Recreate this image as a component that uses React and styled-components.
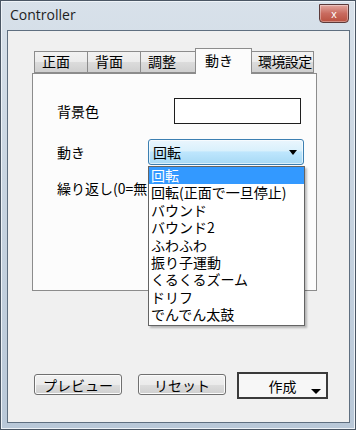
import styled, { createGlobalStyle } from 'styled-components';

const GlobalStyle = createGlobalStyle`
  html, body { margin: 0; padding: 0; background: #ffffff; }
  * { box-sizing: border-box; }
`;

const jp = `"Noto Sans CJK JP", "Noto Sans", sans-serif`;

const Window = styled.div`
  width: 356px;
  height: 430px;
  display: flex;
  flex-direction: column;
  background: linear-gradient(180deg, #d8e1ea 0%, #c9d5e1 40%, #b9c8d8 100%);
  border: 1px solid #4a5664;
  box-shadow: inset 0 0 0 1px #eef3f8;
`;

const TitleBar = styled.div`
  height: 29px;
  display: flex;
  align-items: flex-start;
  justify-content: space-between;
  padding: 0 6px 0 9px;
`;

const Title = styled.div`
  font-family: "Open Sans", "Noto Sans", sans-serif;
  font-size: 14px;
  color: #1e1e1e;
  margin-top: 4px;
`;

const CloseBtn = styled.div`
  width: 30px;
  height: 19px;
  margin-top: 3px;
  display: flex;
  align-items: center;
  justify-content: center;
  border: 1px solid #5b3a3a;
  border-radius: 0 0 4px 4px;
  background: linear-gradient(180deg, #e3a79f 0%, #c96b5f 50%, #b9503f 100%);
  color: #fff;
  font-family: "Liberation Sans", sans-serif;
  font-size: 11px;
  box-shadow: inset 0 0 0 1px rgba(255, 255, 255, 0.35);
`;

const Client = styled.div`
  flex: 1;
  margin: 0 5px 6px 6px;
  border: 1px solid #5f6f80;
  background: #f0f0f0;
  display: flex;
  flex-direction: column;
  padding: 16px 0 0 24px;
  position: relative;
`;

const TabStrip = styled.div`
  display: flex;
  align-items: flex-end;
  height: 26px;
  padding-left: 2px;
`;

const Tab = styled.div`
  height: ${(p) => (p.$active ? '26px' : '22px')};
  width: ${(p) => p.$w}px;
  margin: ${(p) => (p.$active ? '0 -1px -1px -1px' : '0')};
  padding: ${(p) => (p.$active ? '2px 0 0 9px' : '0 0 0 7px')};
  line-height: 19px;
  white-space: nowrap;
  border: 1px solid #8c8c8c;
  border-bottom: ${(p) => (p.$active ? 'none' : '1px solid #8c8c8c')};
  border-left: ${(p) => (p.$first || p.$active ? '1px solid #8c8c8c' : 'none')};
  background: ${(p) =>
    p.$active ? '#fcfcfc' : 'linear-gradient(180deg, #f2f2f2 0%, #ebebeb 50%, #dcdcdc 51%, #cfcfcf 100%)'};
  font-family: ${jp};
  font-size: 14px;
  letter-spacing: ${(p) => (p.$tight ? '-0.6px' : '0')};
  color: #000;
  position: relative;
  z-index: ${(p) => (p.$active ? 2 : 1)};
`;

const Panel = styled.div`
  width: 285px;
  height: 218px;
  background: #fcfcfc;
  border: 1px solid #8c8c8c;
  padding: 24px 12px 0 24px;
  display: flex;
  flex-direction: column;
  position: relative;
`;

const Row = styled.div`
  display: flex;
  align-items: center;
  justify-content: space-between;
  height: ${(p) => p.$h}px;
  margin-bottom: ${(p) => p.$mb || 0}px;
`;

const Label = styled.div`
  font-family: ${jp};
  font-size: 14px;
  color: #000;
  white-space: nowrap;
  overflow: hidden;
  max-width: ${(p) => (p.$clip ? `${p.$clip}px` : 'none')};
`;

const ColorBox = styled.div`
  width: 127px;
  height: 26px;
  margin-right: 3px;
  border: 1px solid #1e1e1e;
  background: #ffffff;
`;

const ComboWrap = styled.div`
  position: relative;
`;

const Combo = styled.div`
  width: 156px;
  height: 26px;
  border: 1px solid #3c7fb1;
  border-radius: 3px;
  background: linear-gradient(180deg, #eaf6fd 0%, #d9f0fc 45%, #bee6fd 50%, #a7d9f5 100%);
  display: flex;
  align-items: center;
  justify-content: space-between;
  padding: 0 6px 0 4px;
  font-family: ${jp};
  font-size: 14px;
  box-shadow: inset 0 0 0 1px rgba(255, 255, 255, 0.6);
`;

const Arrow = styled.div`
  width: 0;
  height: 0;
  border-left: 4px solid transparent;
  border-right: 4px solid transparent;
  border-top: 5px solid #000;
`;

const List = styled.div`
  position: absolute;
  left: 0;
  top: 27px;
  width: 157px;
  border: 1px solid #646464;
  background: #ffffff;
  box-shadow: 2px 2px 2px rgba(0, 0, 0, 0.25);
  z-index: 5;
  padding-bottom: 1px;
`;

const Item = styled.div`
  height: 17.4px;
  line-height: 17px;
  padding-left: 2px;
  font-family: ${jp};
  font-size: 14px;
  white-space: nowrap;
  color: ${(p) => (p.$sel ? '#ffffff' : '#000000')};
  background: ${(p) => (p.$sel ? '#3399ff' : 'transparent')};
`;

const Footer = styled.div`
  display: flex;
  align-items: center;
  margin-top: 81px;
  padding-left: 2px;
`;

const Button = styled.div`
  width: ${(p) => p.$w}px;
  height: 21px;
  margin-right: ${(p) => p.$mr}px;
  margin-top: -2px;
  border: 1px solid #707070;
  border-radius: 3px;
  background: linear-gradient(180deg, #f2f2f2 0%, #ebebeb 50%, #dddddd 51%, #cfcfcf 100%);
  box-shadow: inset 0 0 0 1px #fbfbfb;
  display: flex;
  align-items: center;
  justify-content: center;
  font-family: ${jp};
  font-size: 14px;
  color: #000;
`;

const SplitButton = styled.div`
  width: 91px;
  height: 27px;
  border: 2px solid #3a3a3a;
  background: #f7f7f7;
  display: flex;
  align-items: center;
  justify-content: center;
  font-family: ${jp};
  font-size: 14px;
  color: #000;
  position: relative;
`;

const SplitArrow = styled.div`
  position: absolute;
  right: 5px;
  bottom: 3px;
  width: 0;
  height: 0;
  border-left: 5px solid transparent;
  border-right: 5px solid transparent;
  border-top: 5px solid #000;
`;

const tabs = [
  { label: '正面', w: 54 },
  { label: '背面', w: 53 },
  { label: '調整', w: 55 },
  { label: '動き', w: 57, active: true },
  { label: '環境設定', w: 63, tight: true },
];

const motions = [
  '回転',
  '回転(正面で一旦停止)',
  'バウンド',
  'バウンド2',
  'ふわふわ',
  '振り子運動',
  'くるくるズーム',
  'ドリフ',
  'でんでん太鼓',
];

export default function App() {
  return (
    <>
      <GlobalStyle />
      <Window>
        <TitleBar>
          <Title>Controller</Title>
          <CloseBtn>x</CloseBtn>
        </TitleBar>
        <Client>
          <TabStrip>
            {tabs.map((t, i) => (
              <Tab key={t.label} $w={t.w} $active={t.active} $first={i === 0} $tight={t.tight}>
                {t.label}
              </Tab>
            ))}
          </TabStrip>
          <Panel>
            <Row $h={26} $mb={15}>
              <Label>背景色</Label>
              <ColorBox />
            </Row>
            <Row $h={26} $mb={12}>
              <Label>動き</Label>
              <ComboWrap>
                <Combo>
                  <span>回転</span>
                  <Arrow />
                </Combo>
                <List>
                  {motions.map((m, i) => (
                    <Item key={m} $sel={i === 0}>
                      {m}
                    </Item>
                  ))}
                </List>
              </ComboWrap>
            </Row>
            <Row $h={22}>
              <Label $clip={90}>繰り返し(0=無限)</Label>
            </Row>
          </Panel>
          <Footer>
            <Button $w={88} $mr={16}>プレビュー</Button>
            <Button $w={88} $mr={11}>リセット</Button>
            <SplitButton>
              作成
              <SplitArrow />
            </SplitButton>
          </Footer>
        </Client>
      </Window>
    </>
  );
}
